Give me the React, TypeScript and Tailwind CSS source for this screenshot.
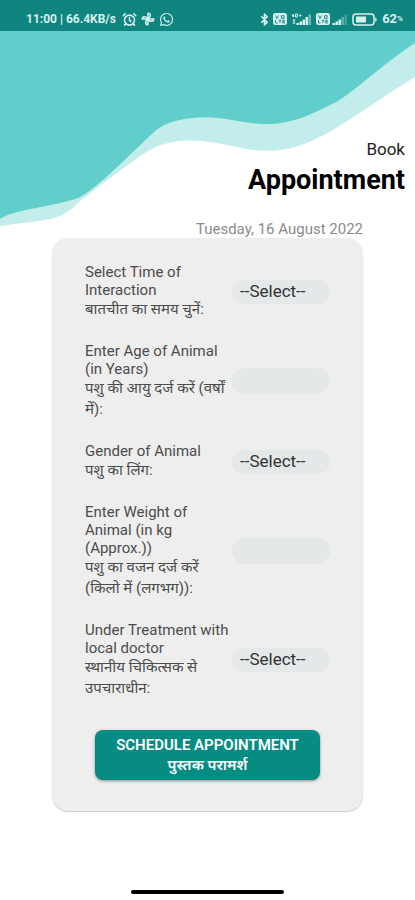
import { useState } from "react";
import { FaWhatsapp } from "react-icons/fa";
import { LuAlarmClock, LuBluetooth } from "react-icons/lu";

// ---------- Types ----------
interface Field {
  id: string;
  kind: "select" | "text";
  label: string[];
  labelHi: string[];
  options?: string[];
}

// ---------- Data ----------
const fields: Field[] = [
  {
    id: "time",
    kind: "select",
    label: ["Select Time of", "Interaction"],
    labelHi: ["बातचीत का समय चुनें:"],
    options: ["Morning", "Evening"],
  },
  { id: "age", kind: "text", label: ["Enter Age of Animal", "(in Years)"], labelHi: ["पशु की आयु दर्ज करें (वर्षों", "में):"] },
  { id: "gender", kind: "select", label: ["Gender of Animal"], labelHi: ["पशु का लिंग:"], options: ["Male", "Female"] },
  {
    id: "weight",
    kind: "text",
    label: ["Enter Weight of", "Animal (in kg", "(Approx.))"],
    labelHi: ["पशु का वजन दर्ज करें", "(किलो में (लगभग)):"],
  },
  {
    id: "treatment",
    kind: "select",
    label: ["Under Treatment with", "local doctor"],
    labelHi: ["स्थानीय चिकित्सक से", "उपचाराधीन:"],
    options: ["Yes", "No"],
  },
];

// ---------- Status bar ----------
const PinwheelIcon = () => (
  <svg width="14" height="14" viewBox="0 0 14 14" fill="none" stroke="currentColor" strokeWidth="1.5" strokeLinejoin="round" aria-hidden="true">
    <path d="M7 7V1.2C9.6 1.2 10.6 4.6 7 7ZM7 7h5.8C12.8 9.6 9.4 10.6 7 7ZM7 7v5.8C4.4 12.8 3.4 9.4 7 7ZM7 7H1.2C1.2 4.4 4.6 3.4 7 7Z" />
  </svg>
);

const VolteIcon = () => (
  <svg width="14" height="12" viewBox="0 0 14 12" aria-hidden="true">
    <rect width="14" height="12" rx="2.5" fill="currentColor" />
    <path d="M2.5 2.5l1.5 3 1.5-3M8.5 2.7h2.6v2.6H8.5zM2.5 7v3h2.2M5.5 7.2h3M7 7.2V10M11.8 7.2H9.8V10h2M9.8 8.6h1.8" stroke="#108580" strokeWidth="0.9" fill="none" />
  </svg>
);

const SignalIcon = ({ weak = false }: { weak?: boolean }) => (
  <svg width={weak ? 16 : 21} height="13" viewBox={weak ? "5 0 16 13" : "0 0 21 13"} aria-hidden="true">
    {!weak && <path d="M2.5 1L1 3h2.2M2.5 1v3.2M4.5 1h1.8v3H4.500zM8 2.500h2.600M9.300 1.200v2.600M1.800 7h2.400M3 6.500v4M2 9.500l1 1.200 1-1.200" stroke="currentColor" strokeWidth="1" fill="none" />}
    <path d="M5.5 10H8v2H5.5zM8.5 8.5H11V12H8.5zM11.5 6.5H14V12h-2.5z" fill="currentColor" />
    <path d="M14.5 4H17v8h-2.5z" fill="currentColor" opacity={weak ? 0.4 : 1} />
    <path d="M17.5 1.5H20V12h-2.5z" fill="currentColor" opacity={weak ? 0.25 : 0.5} />
  </svg>
);

const BatteryIcon = () => (
  <svg width="26" height="13" viewBox="0 0 26 13" aria-hidden="true">
    <rect x="1" y="1" width="21" height="11" rx="3" stroke="currentColor" strokeWidth="1.5" fill="none" />
    <rect x="4" y="3.5" width="10" height="6" fill="currentColor" />
    <path d="M23.2 4.2c2 .8 2 3.8 0 4.6z" fill="currentColor" />
  </svg>
);

const StatusBar = () => (
  <div className="relative flex h-[31px] items-end justify-between bg-[#108580] pr-3 pb-1 pl-[26px] text-xs font-bold text-[#d5f1ee]">
    <div className="flex items-center">
      <span>11:00 | 66.4KB/s</span>
      <LuAlarmClock size={15} strokeWidth={2.5} className="ml-1.5" />
      <span className="ml-1"><PinwheelIcon /></span>
      <FaWhatsapp size={15} className="ml-1" />
    </div>
    <div className="flex items-center">
      <LuBluetooth size={13} strokeWidth={3} className="mr-0.5" />
      <VolteIcon />
      <span className="ml-1"><SignalIcon /></span>
      <span className="ml-1"><VolteIcon /></span>
      <span className="ml-0.5"><SignalIcon weak /></span>
      <span className="mx-1"><BatteryIcon /></span>
      <span className="text-[13px] leading-4">62</span>
      <span className="text-[8px]">%</span>
    </div>
  </div>
);

// ---------- Header ----------
const Waves = () => (
  <svg className="absolute inset-x-0 top-[31px] h-[196px] w-full" viewBox="0 31 415 196" preserveAspectRatio="none" aria-hidden="true">
    <path
      fill="#c3edea"
      d="M0 31H415V77C388 93 357 116 328 133C299 148 279 154 247 149C220 144 205 139 180 141C164 143 156 146 143 154C122 169 98 187 79 202C67 214 60 218 38 221C26 223 12 224 0 226Z"
    />
    <path
      fill="#62cecb"
      d="M0 31H415V43C388 60 361 86 338 101C310 116 288 125 263 124C236 123 221 115 193 118C173 120 163 124 153 133C131 153 96 190 78 198C55 206 22 209 8 215C5 216 2 218 0 219Z"
    />
  </svg>
);

const Header = () => (
  <header className="relative pt-[106px] text-right">
    <p className="pr-2.5 text-[17px] leading-6 text-[#222]">Book</p>
    <h1 className="pr-2.5 text-[27px] leading-[38px] font-bold text-black">Appointment</h1>
    <p className="mt-[21px] pr-[52px] text-[15px] leading-[18px] text-[#8b8b8b]">Tuesday, 16 August 2022</p>
  </header>
);

// ---------- Form ----------
const FieldRow = ({ field }: { field: Field }) => {
  const [value, setValue] = useState("");

  return (
    <div className="grid grid-cols-[3fr_2fr] items-center">
      <label htmlFor={field.id} className="text-[15px] leading-[18px] whitespace-nowrap text-[#4c4c4c]">
        {field.label.map((line) => (
          <span key={line} className="block">{line}</span>
        ))}
        {field.labelHi.map((line) => (
          <span key={line} lang="hi" className="block leading-[21px]">{line}</span>
        ))}
      </label>
      {field.kind === "select" ? (
        <select
          id={field.id}
          value={value}
          onChange={(e) => setValue(e.target.value)}
          className="h-6 w-full appearance-none rounded-full bg-[#e4e8e9] px-2 pb-0.5 text-[17px] leading-[22px] text-[#333]"
        >
          <option value="">--Select--</option>
          {field.options?.map((option) => (
            <option key={option} value={option}>{option}</option>
          ))}
        </select>
      ) : (
        <input
          id={field.id}
          inputMode="numeric"
          value={value}
          onChange={(e) => setValue(e.target.value)}
          className="h-[26px] w-full rounded-full bg-[#e4e8e9] px-2 text-[17px] text-[#333]"
        />
      )}
    </div>
  );
};

const AppointmentForm = () => (
  <form
    onSubmit={(e) => e.preventDefault()}
    className="relative mx-[52px] rounded-2xl bg-[#eeeeee] px-[33px] pt-[25px] pb-[31px] shadow-[0_1px_1px_#cccccc]"
  >
    <div className="flex flex-col gap-[22px]">
      {fields.map((field) => (
        <FieldRow key={field.id} field={field} />
      ))}
    </div>
    <div className="mt-[31px] px-2.5">
      <button
        type="submit"
        className="w-full rounded-lg bg-[#078c84] py-[5px] text-[15px] leading-5 font-semibold whitespace-nowrap text-white shadow-[0_1px_3px_#888888]"
      >
        <span className="block">SCHEDULE APPOINTMENT</span>
        <span lang="hi" className="block">पुस्तक परामर्श</span>
      </button>
    </div>
  </form>
);

const App = () => (
  <div className="relative flex min-h-screen flex-col bg-white font-[Roboto,'Noto_Sans',sans-serif]">
    <Waves />
    <StatusBar />
    <main>
      <Header />
      <AppointmentForm />
    </main>
    <div className="mx-auto mt-auto mb-1.5 h-1 w-[153px] rounded-full bg-black" />
  </div>
);

export default App;
